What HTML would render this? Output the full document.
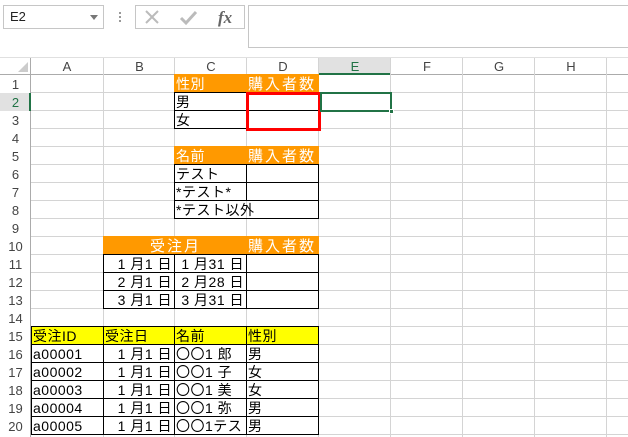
<!DOCTYPE html>
<html><head><meta charset="utf-8"><style>
*{margin:0;padding:0;box-sizing:border-box}
body{width:628px;height:437px;overflow:hidden;background:#fff;position:relative;font-family:"Liberation Sans","Noto Sans CJK JP",sans-serif}
.a{position:absolute}
.grid{position:absolute;left:31px;top:75px;width:597px;height:362px;
background-image:repeating-linear-gradient(to bottom,transparent 0,transparent 17px,#d4d4d4 17px,#d4d4d4 18px)}
.vl{position:absolute;top:58px;width:1px;height:379px;background:#d4d4d4}
.ch{position:absolute;top:58px;height:17px;font-size:13px;color:#444;text-align:center;line-height:17px}
.rh{position:absolute;left:0;width:31px;height:18px;font-size:13px;color:#444;text-align:center;line-height:19px}
.c{position:absolute;height:19px;border:1px solid #000;font-size:14px;line-height:19px;padding-left:1px;white-space:nowrap;color:#000;font-family:"Liberation Sans","Noto Sans CJK JP",sans-serif;overflow:visible;letter-spacing:0.5px}
.c.h4{letter-spacing:2px;font-size:15px}
.o{background:#ff9900;color:#fff}
.y{background:#ffff00}
.r{text-align:right;padding-right:2px}
</style></head><body>
<div class="a" style="left:3px;top:5px;width:101px;height:24px;border:1px solid #c6c6c6;font-size:13px;line-height:22px;padding-left:6px;color:#222">E2</div>
<div class="a" style="left:90px;top:15px;width:0;height:0;border-left:4px solid transparent;border-right:4px solid transparent;border-top:5px solid #777"></div>
<div class="a" style="left:119px;top:12px;width:2px;height:2px;background:#999"></div>
<div class="a" style="left:119px;top:16px;width:2px;height:2px;background:#999"></div>
<div class="a" style="left:119px;top:20px;width:2px;height:2px;background:#999"></div>
<div class="a" style="left:135px;top:5px;width:110px;height:24px;border:1px solid #c6c6c6"></div>
<svg class="a" style="left:140px;top:6px" width="100" height="22">
<path d="M6 5 L18 17 M18 5 L6 17" stroke="#bbb" stroke-width="2" fill="none"/>
<path d="M41 12 L46 17 L56 6" stroke="#bbb" stroke-width="3" fill="none"/>
<text x="78" y="17" font-family="Liberation Serif" font-style="italic" font-weight="bold" font-size="17" fill="#666">fx</text>
</svg>
<div class="a" style="left:248px;top:5px;width:390px;height:43px;border:1px solid #c6c6c6"></div>
<div class="a" style="left:0;top:57px;width:628px;height:1px;background:#e0e0e0"></div>
<div class="a" style="left:0;top:74px;width:628px;height:1px;background:#ababab"></div>
<div class="a" style="left:30px;top:58px;width:1px;height:379px;background:#ababab"></div>
<svg class="a" style="left:17px;top:61px" width="12" height="12"><path d="M11 1 L11 11 L1 11 Z" fill="#ccc"/></svg>
<div class="a" style="left:319px;top:58px;width:72px;height:17px;background:#e1e1e1"></div>
<div class="a" style="left:319px;top:73px;width:72px;height:2px;background:#217346"></div>
<div class="a" style="left:0;top:93px;width:31px;height:18px;background:#e1e1e1"></div>
<div class="a" style="left:29px;top:93px;width:2px;height:18px;background:#217346"></div>
<div class="grid"></div>
<div class="vl" style="left:103px"></div><div class="vl" style="left:174px"></div><div class="vl" style="left:246px"></div><div class="vl" style="left:318px"></div><div class="vl" style="left:390px"></div><div class="vl" style="left:462px"></div><div class="vl" style="left:534px"></div><div class="vl" style="left:606px"></div>
<div class="ch" style="left:31px;width:72px">A</div><div class="ch" style="left:104px;width:71px">B</div><div class="ch" style="left:175px;width:72px">C</div><div class="ch" style="left:247px;width:72px">D</div><div class="ch" style="left:319px;width:72px;color:#217346">E</div><div class="ch" style="left:391px;width:72px">F</div><div class="ch" style="left:463px;width:72px">G</div><div class="ch" style="left:535px;width:72px">H</div>
<div class="rh" style="top:75px">1</div><div class="rh" style="top:93px;color:#217346">2</div><div class="rh" style="top:111px">3</div><div class="rh" style="top:129px">4</div><div class="rh" style="top:147px">5</div><div class="rh" style="top:165px">6</div><div class="rh" style="top:183px">7</div><div class="rh" style="top:201px">8</div><div class="rh" style="top:219px">9</div><div class="rh" style="top:237px">10</div><div class="rh" style="top:255px">11</div><div class="rh" style="top:273px">12</div><div class="rh" style="top:291px">13</div><div class="rh" style="top:309px">14</div><div class="rh" style="top:327px">15</div><div class="rh" style="top:345px">16</div><div class="rh" style="top:363px">17</div><div class="rh" style="top:381px">18</div><div class="rh" style="top:399px">19</div><div class="rh" style="top:417px">20</div>
<div class="c o" style="left:174px;top:74px;width:73px;border-color:#ff9900;border-bottom-color:#000">性別</div>
<div class="c o h4" style="left:246px;top:74px;width:73px;border-color:#ff9900;border-bottom-color:#000">購入者数</div>
<div class="c" style="left:174px;top:92px;width:73px">男</div>
<div class="c" style="left:246px;top:92px;width:73px"></div>
<div class="c" style="left:174px;top:110px;width:73px">女</div>
<div class="c" style="left:246px;top:110px;width:73px"></div>
<div class="a" style="left:246px;top:92px;width:75px;height:39px;border:3px solid #ff0000"></div>
<div class="a" style="left:320px;top:92px;width:72px;height:20px;border:2px solid #217346"></div>
<div class="a" style="left:389px;top:109px;width:5px;height:5px;background:#217346;border:1px solid #fff"></div>
<div class="c o" style="left:174px;top:146px;width:73px;border-color:#ff9900;border-bottom-color:#000">名前</div>
<div class="c o h4" style="left:246px;top:146px;width:73px;border-color:#ff9900;border-bottom-color:#000">購入者数</div>
<div class="c" style="left:174px;top:164px;width:73px">テスト</div>
<div class="c" style="left:246px;top:164px;width:73px"></div>
<div class="c" style="left:174px;top:182px;width:73px">*テスト*</div>
<div class="c" style="left:246px;top:182px;width:73px"></div>
<div class="c" style="left:174px;top:200px;width:145px">*テスト以外</div>
<div class="c o h4" style="left:103px;top:236px;width:144px;text-align:center;border-color:#ff9900;border-bottom-color:#000">受注月</div>
<div class="c o h4" style="left:246px;top:236px;width:73px;border-color:#ff9900;border-bottom-color:#000">購入者数</div>
<div class="c r" style="left:103px;top:254px;width:72px">1 月1 日</div><div class="c r" style="left:174px;top:254px;width:73px">1 月31 日</div><div class="c" style="left:246px;top:254px;width:73px"></div>
<div class="c r" style="left:103px;top:272px;width:72px">2 月1 日</div><div class="c r" style="left:174px;top:272px;width:73px">2 月28 日</div><div class="c" style="left:246px;top:272px;width:73px"></div>
<div class="c r" style="left:103px;top:290px;width:72px">3 月1 日</div><div class="c r" style="left:174px;top:290px;width:73px">3 月31 日</div><div class="c" style="left:246px;top:290px;width:73px"></div>
<div class="c y" style="left:31px;top:326px;width:73px">受注ID</div><div class="c y" style="left:103px;top:326px;width:72px">受注日</div><div class="c y" style="left:174px;top:326px;width:73px">名前</div><div class="c y" style="left:246px;top:326px;width:73px">性別</div>
<div class="c" style="left:31px;top:344px;width:73px">a00001</div><div class="c r" style="left:103px;top:344px;width:72px">1 月1 日</div><div class="c" style="left:174px;top:344px;width:73px">〇〇1 郎</div><div class="c" style="left:246px;top:344px;width:73px">男</div>
<div class="c" style="left:31px;top:362px;width:73px">a00002</div><div class="c r" style="left:103px;top:362px;width:72px">1 月1 日</div><div class="c" style="left:174px;top:362px;width:73px">〇〇1 子</div><div class="c" style="left:246px;top:362px;width:73px">女</div>
<div class="c" style="left:31px;top:380px;width:73px">a00003</div><div class="c r" style="left:103px;top:380px;width:72px">1 月1 日</div><div class="c" style="left:174px;top:380px;width:73px">〇〇1 美</div><div class="c" style="left:246px;top:380px;width:73px">女</div>
<div class="c" style="left:31px;top:398px;width:73px">a00004</div><div class="c r" style="left:103px;top:398px;width:72px">1 月1 日</div><div class="c" style="left:174px;top:398px;width:73px">〇〇1 弥</div><div class="c" style="left:246px;top:398px;width:73px">男</div>
<div class="c" style="left:31px;top:416px;width:73px">a00005</div><div class="c r" style="left:103px;top:416px;width:72px">1 月1 日</div><div class="c" style="left:174px;top:416px;width:73px;overflow:hidden">〇〇1テスト</div><div class="c" style="left:246px;top:416px;width:73px">男</div>
</body></html>
